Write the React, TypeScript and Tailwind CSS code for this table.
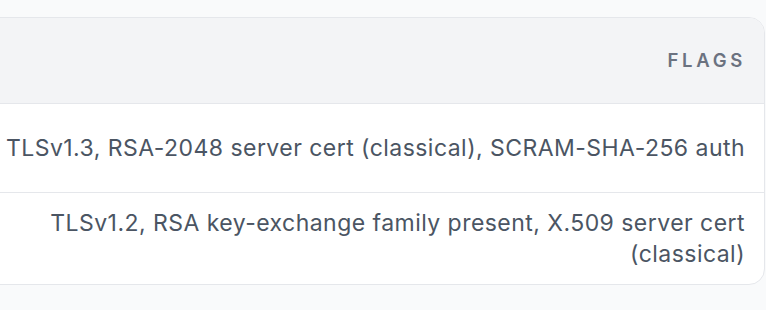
const flags = [
  {
    id: 'pg',
    text: 'TLSv1.3, RSA-2048 server cert (classical), SCRAM-SHA-256 auth',
    height: 'h-[89px]',
  },
  {
    id: 'ldap',
    text: 'TLSv1.2, RSA key-exchange family present, X.509 server cert (classical)',
    height: 'h-[91px]',
  },
];

export default function App() {
  return (
    <div className="min-h-screen bg-[#f9fafb] font-['Inter','Noto_Sans',sans-serif]">
      {/* table scrolled to its right end */}
      <div className="flex justify-end overflow-hidden pt-[17px] pr-px">
        <div className="w-[790px] shrink-0 overflow-hidden rounded-2xl border border-[#e5e7eb] bg-white">
          <div className="flex h-[86px] items-center justify-end border-b border-[#e5e7eb] bg-[#f3f4f6] pr-[18px] text-[18.5px] font-semibold uppercase tracking-[0.2em] text-[#6b7280]">
            Flags
          </div>
          {flags.map((row, i) => (
            <div
              key={row.id}
              className={`flex items-center justify-end pr-[19px] pl-5 text-right text-[23px] leading-[31px] tracking-[0.02em] text-[#4b5563] ${row.height} ${
                i < flags.length - 1 ? 'border-b border-[#e5e7eb]' : ''
              }`}
            >
              {row.text}
            </div>
          ))}
        </div>
      </div>
    </div>
  );
}
